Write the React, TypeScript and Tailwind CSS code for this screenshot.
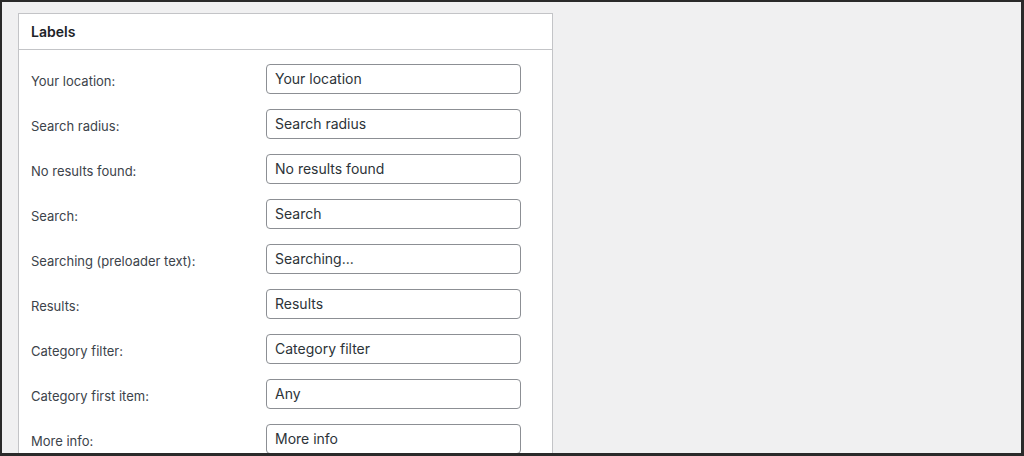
const FIELDS: [string, string][] = [
  ["Your location:", "Your location"],
  ["Search radius:", "Search radius"],
  ["No results found:", "No results found"],
  ["Search:", "Search"],
  ["Searching (preloader text):", "Searching..."],
  ["Results:", "Results"],
  ["Category filter:", "Category filter"],
  ["Category first item:", "Any"],
  ["More info:", "More info"],
]

export default function App() {
  return (
    <div className="h-[456px] w-[1024px] overflow-hidden border-t-2 border-l-2 border-r-[3px] border-b-[3px] border-[#2a2a2a] bg-[#f0f0f1] pl-4 pt-[11px] font-['Inter',sans-serif]">
      <div className="w-[535px] border border-[#c3c4c7] bg-white">
        <div className="flex h-[36px] items-center border-b border-[#c3c4c7] px-3">
          <h2 className="text-[14px] font-semibold text-[#1d2327]">Labels</h2>
        </div>
        <div className="flex flex-col gap-[15px] px-3 pt-[14px]">
          {FIELDS.map(([label, value]) => (
            <div key={label} className="flex items-center">
              <span className="w-[235px] shrink-0 pt-[6px] text-[13px] text-[#3c434a]">{label}</span>
              <input
                defaultValue={value}
                className="h-[30px] w-[255px] rounded-[4px] border border-[#8c8f94] px-2 pb-[2px] text-[14px] text-[#2c3338] outline-none"
              />
            </div>
          ))}
        </div>
      </div>
    </div>
  )
}
